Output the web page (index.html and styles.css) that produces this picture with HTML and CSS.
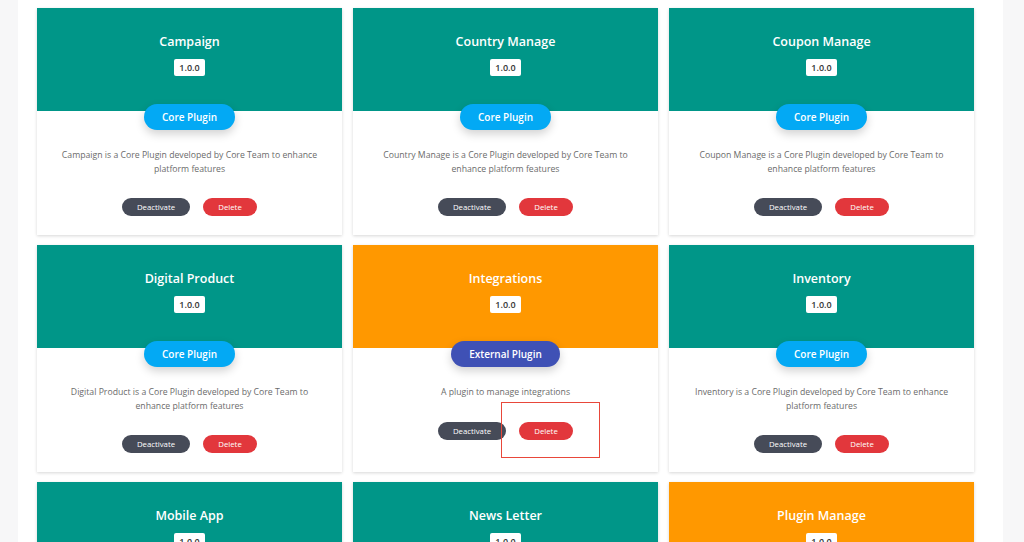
FILE: index.html
```html
<!DOCTYPE html>
<html lang="en">
<head>
    <meta charset="UTF-8">
    <meta name="viewport" content="width=device-width, initial-scale=1.0">
    <title>Plugin Manage</title>
    <link rel="stylesheet" href="styles.css">
</head>
<body>
    <div class="panel">
        <div class="plugin-grid">

            <div class="plugin-card">
                <div class="plugin-head head-core">
                    <h3 class="plugin-name">Campaign</h3>
                    <span class="plugin-version">1.0.0</span>
                </div>
                <span class="plugin-type type-core">Core Plugin</span>
                <p class="plugin-desc">Campaign is a Core Plugin developed by Core Team to enhance platform features</p>
                <div class="plugin-actions">
                    <button class="btn btn-dark">Deactivate</button>
                    <button class="btn btn-red">Delete</button>
                </div>
            </div>

            <div class="plugin-card">
                <div class="plugin-head head-core">
                    <h3 class="plugin-name">Country Manage</h3>
                    <span class="plugin-version">1.0.0</span>
                </div>
                <span class="plugin-type type-core">Core Plugin</span>
                <p class="plugin-desc">Country Manage is a Core Plugin developed by Core Team to enhance platform features</p>
                <div class="plugin-actions">
                    <button class="btn btn-dark">Deactivate</button>
                    <button class="btn btn-red">Delete</button>
                </div>
            </div>

            <div class="plugin-card">
                <div class="plugin-head head-core">
                    <h3 class="plugin-name">Coupon Manage</h3>
                    <span class="plugin-version">1.0.0</span>
                </div>
                <span class="plugin-type type-core">Core Plugin</span>
                <p class="plugin-desc">Coupon Manage is a Core Plugin developed by Core Team to enhance platform features</p>
                <div class="plugin-actions">
                    <button class="btn btn-dark">Deactivate</button>
                    <button class="btn btn-red">Delete</button>
                </div>
            </div>

            <div class="plugin-card">
                <div class="plugin-head head-core">
                    <h3 class="plugin-name">Digital Product</h3>
                    <span class="plugin-version">1.0.0</span>
                </div>
                <span class="plugin-type type-core">Core Plugin</span>
                <p class="plugin-desc">Digital Product is a Core Plugin developed by Core Team to enhance platform features</p>
                <div class="plugin-actions">
                    <button class="btn btn-dark">Deactivate</button>
                    <button class="btn btn-red">Delete</button>
                </div>
            </div>

            <div class="plugin-card">
                <div class="plugin-head head-external">
                    <h3 class="plugin-name">Integrations</h3>
                    <span class="plugin-version">1.0.0</span>
                </div>
                <span class="plugin-type type-external">External Plugin</span>
                <p class="plugin-desc">A plugin to manage integrations</p>
                <div class="plugin-actions">
                    <button class="btn btn-dark">Deactivate</button>
                    <button class="btn btn-red">Delete</button>
                    <!-- highlight box from the screenshot -->
                    <span class="highlight"></span>
                </div>
            </div>

            <div class="plugin-card">
                <div class="plugin-head head-core">
                    <h3 class="plugin-name">Inventory</h3>
                    <span class="plugin-version">1.0.0</span>
                </div>
                <span class="plugin-type type-core">Core Plugin</span>
                <p class="plugin-desc">Inventory is a Core Plugin developed by Core Team to enhance platform features</p>
                <div class="plugin-actions">
                    <button class="btn btn-dark">Deactivate</button>
                    <button class="btn btn-red">Delete</button>
                </div>
            </div>

            <div class="plugin-card">
                <div class="plugin-head head-core">
                    <h3 class="plugin-name">Mobile App</h3>
                    <span class="plugin-version">1.0.0</span>
                </div>
                <span class="plugin-type type-core">Core Plugin</span>
                <p class="plugin-desc">Mobile App is a Core Plugin developed by Core Team to enhance platform features</p>
                <div class="plugin-actions">
                    <button class="btn btn-dark">Deactivate</button>
                    <button class="btn btn-red">Delete</button>
                </div>
            </div>

            <div class="plugin-card">
                <div class="plugin-head head-core">
                    <h3 class="plugin-name">News Letter</h3>
                    <span class="plugin-version">1.0.0</span>
                </div>
                <span class="plugin-type type-core">Core Plugin</span>
                <p class="plugin-desc">News Letter is a Core Plugin developed by Core Team to enhance platform features</p>
                <div class="plugin-actions">
                    <button class="btn btn-dark">Deactivate</button>
                    <button class="btn btn-red">Delete</button>
                </div>
            </div>

            <div class="plugin-card">
                <div class="plugin-head head-external">
                    <h3 class="plugin-name">Plugin Manage</h3>
                    <span class="plugin-version">1.0.0</span>
                </div>
                <span class="plugin-type type-core">Core Plugin</span>
                <p class="plugin-desc">Plugin Manage is a Core Plugin developed by Core Team to enhance platform features</p>
                <div class="plugin-actions">
                    <button class="btn btn-dark">Deactivate</button>
                    <button class="btn btn-red">Delete</button>
                </div>
            </div>

        </div>
    </div>
</body>
</html>
```

FILE: styles.css
```css
body {
    margin: 0;
    background-color: #f7f7f8;
    font-family: "Open Sans", "Noto Sans", Arial, sans-serif;
    overflow: hidden;
}

.panel {
    margin: 0 21px 0 18px;
    padding: 8px 29px 20px 19px;
    background-color: #ffffff;
    min-height: 542px;
    box-sizing: border-box;
}

.plugin-grid {
    display: grid;
    grid-template-columns: repeat(3, 305px);
    column-gap: 11px;
    row-gap: 10px;
}

.plugin-card {
    display: flex;
    flex-direction: column;
    align-items: center;
    background-color: #ffffff;
    box-shadow: 0 1px 3px rgba(0, 0, 0, 0.16);
    padding-bottom: 19px;
}

.plugin-head {
    align-self: stretch;
    display: flex;
    flex-direction: column;
    align-items: center;
    height: 103px;
    box-sizing: border-box;
    padding-top: 26px;
}

.head-core {
    background-color: #009688;
}

.head-external {
    background-color: #ff9800;
}

.plugin-name {
    margin: 0;
    color: #ffffff;
    font-size: 12.5px;
    font-weight: 600;
    line-height: 16px;
}

.plugin-version {
    margin-top: 9px;
    background-color: #ffffff;
    color: #333;
    font-size: 9px;
    font-weight: 600;
    line-height: 17px;
    padding: 0 5px;
    border-radius: 2px;
}

.plugin-type {
    margin-top: -7px;
    height: 26px;
    line-height: 26px;
    border-radius: 13px;
    color: #ffffff;
    font-size: 10px;
    font-weight: 600;
    text-align: center;
    box-shadow: 0 4px 10px rgba(0, 0, 0, 0.18);
}

.type-core {
    background-color: #03a9f4;
    width: 91px;
}

.type-external {
    background-color: #3f51b5;
    width: 109px;
}

.plugin-desc {
    margin: 19px 0 0;
    padding: 0 20px;
    color: #6b6b6b;
    font-size: 8.7px;
    line-height: 13.5px;
    text-align: center;
}

.plugin-actions {
    position: relative;
    display: flex;
    gap: 13px;
    margin-top: 22px;
}

.btn {
    height: 18px;
    border: none;
    border-radius: 9px;
    color: #ffffff;
    font-family: inherit;
    font-size: 7.8px;
    padding: 0;
    cursor: pointer;
}

.btn-dark {
    background-color: #464b58;
    width: 68px;
}

.btn-red {
    background-color: #e2373c;
    width: 54px;
}

.highlight {
    position: absolute;
    left: 63px;
    top: -20px;
    width: 97px;
    height: 54px;
    border: 1px solid #e8483a;
}
```
